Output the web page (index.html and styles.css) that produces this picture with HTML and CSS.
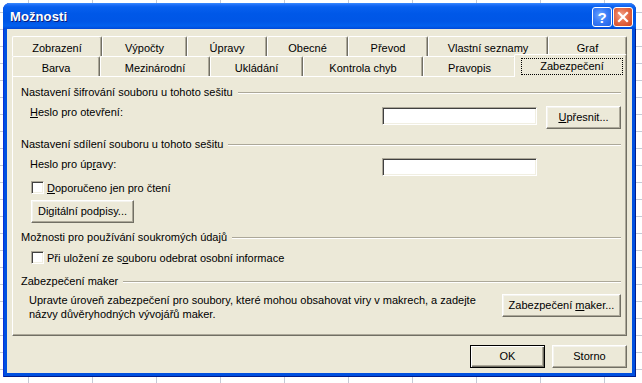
FILE: index.html
```html
<!DOCTYPE html>
<html lang="cs">
<head>
<meta charset="utf-8">
<title>Možnosti</title>
<link rel="stylesheet" href="styles.css">
</head>
<body>
<div class="dialog">
  <div class="titlebar">
    <span class="title">Možnosti</span>
    <div class="caption-buttons">
      <span class="cbtn help">?</span>
      <span class="cbtn close"><svg width="18" height="18" viewBox="0 0 18 18"><path d="M5 5 L13 13 M13 5 L5 13" stroke="#fff" stroke-width="2.2" stroke-linecap="square" fill="none"/></svg></span>
    </div>
  </div>
  <div class="client">
    <div class="tabs">
      <div class="tabrow back">
        <div class="tab">Zobrazení</div>
        <div class="tab">Výpočty</div>
        <div class="tab">Úpravy</div>
        <div class="tab">Obecné</div>
        <div class="tab">Převod</div>
        <div class="tab">Vlastní seznamy</div>
        <div class="tab">Graf</div>
      </div>
      <div class="tabrow front">
        <div class="tab">Barva</div>
        <div class="tab">Mezinárodní</div>
        <div class="tab">Ukládání</div>
        <div class="tab">Kontrola chyb</div>
        <div class="tab">Pravopis</div>
        <div class="tab selected"><span class="focus">Zabezpečení</span></div>
      </div>
    </div>
    <div class="panel">
      <div class="group g1"><span class="gtext">Nastavení šifrování souboru u tohoto sešitu</span><span class="gline"></span></div>
      <div class="row row-open">
        <span class="lbl"><u>H</u>eslo pro otevření:</span>
        <span class="edit"></span>
        <span class="btn btn-adv"><u>U</u>přesnit...</span>
      </div>
      <div class="group g2"><span class="gtext">Nastavení sdílení souboru u tohoto sešitu</span><span class="gline"></span></div>
      <div class="row row-modify">
        <span class="lbl">Heslo pro úp<u>r</u>avy:</span>
        <span class="edit"></span>
      </div>
      <div class="check c1"><span class="box"></span><span class="clabel"><u>D</u>oporučeno jen pro čtení</span></div>
      <div class="btnrow"><span class="btn btn-sign">Digitální podpisy...</span></div>
      <div class="group g3"><span class="gtext">Možnosti pro používání soukromých údajů</span><span class="gline"></span></div>
      <div class="check c2"><span class="box"></span><span class="clabel">Při uložení ze s<u>o</u>uboru odebrat osobní informace</span></div>
      <div class="group g4"><span class="gtext">Zabezpečení maker</span><span class="gline"></span></div>
      <div class="macro">
        <p class="mtext">Upravte úroveň zabezpečení pro soubory, které mohou obsahovat viry v makrech, a zadejte<br>názvy důvěryhodných vývojářů maker.</p>
        <span class="btn btn-macro">Zabezpečení <u>m</u>aker...</span>
      </div>
    </div>
    <div class="footer">
      <span class="btn default">OK</span>
      <span class="btn">Storno</span>
    </div>
  </div>
</div>
</body>
</html>
```
FILE: styles.css
```css
* { box-sizing: border-box; }
html, body { margin: 0; }
body {
  width: 642px;
  height: 383px;
  overflow: hidden;
  padding: 3px 0 0 3px;
  background-color: #fff;
  background-image:
    linear-gradient(to right, #C4CAD6 1px, transparent 1px),
    linear-gradient(to bottom, #C4CAD6 1px, transparent 1px);
  background-size: 64px 17px;
  background-position: 28px 12px;
  font: 11px "Liberation Sans", Arial, sans-serif;
  color: #000;
}
u { text-decoration: underline; text-underline-offset: 1px; }

.dialog {
  width: 633px;
  height: 374px;
  display: flex;
  flex-direction: column;
  background: #0050E0;
  border-radius: 7px 7px 0 0;
  box-shadow: inset 1px 0 #0831D9, inset -1px -1px #001C8C;
}

.titlebar {
  height: 26px;
  flex: none;
  display: flex;
  align-items: flex-start;
  padding-left: 7px;
  border-radius: 7px 7px 0 0;
  background: linear-gradient(to bottom, #3A8CFF 0, #1C6CF6 2px, #0860EE 4px, #0058E8 40%, #0056E6 70%, #0260EE 88%, #0048D8 100%);
}
.title {
  margin-top: 6px;
  font: bold 13px "Liberation Sans", Arial, sans-serif;
  color: #fff;
  text-shadow: 1px 1px #0A1C7A;
  letter-spacing: 0.1px;
}
.caption-buttons {
  margin-left: auto;
  margin-top: 4px;
  padding-right: 3px;
  display: flex;
  gap: 1px;
}
.cbtn {
  width: 20px;
  height: 20px;
  border: 1px solid #fff;
  border-radius: 3px;
  display: flex;
  align-items: center;
  justify-content: center;
  color: #fff;
  font: bold 15px "Liberation Sans", Arial, sans-serif;
}
.help {
  background: radial-gradient(circle at 40% 40%, #6FA6FF 0, #3A7DF7 45%, #1E5FE4 100%);
}
.close {
  background: radial-gradient(circle at 40% 40%, #F2A48C 0, #E46A47 45%, #CF4520 100%);
}

.client {
  flex: 1;
  margin: 0 4px 4px;
  background: #ECE9D8;
  padding: 7px 5px 0;
  display: flex;
  flex-direction: column;
}

.tabrow {
  display: flex;
  height: 20px;
  flex: none;
}
.tab {
  flex: none;
  height: 20px;
  background: #ECE9D8;
  border-top: 1px solid #fff;
  border-left: 1px solid #fff;
  border-right: 1px solid #716F64;
  border-top-left-radius: 2px;
  border-top-right-radius: 2px;
  box-shadow: inset -1px 0 #ACA899;
  text-align: center;
  padding-top: 4px;
  line-height: 14px;
  white-space: nowrap;
}
.back .tab:nth-child(1) { width: 90px; }
.back .tab:nth-child(2) { width: 85px; }
.back .tab:nth-child(3) { width: 80px; }
.back .tab:nth-child(4) { width: 81px; }
.back .tab:nth-child(5) { width: 80px; }
.back .tab:nth-child(6) { width: 120px; }
.back .tab:nth-child(7) { width: 79px; }
.front .tab:nth-child(1) { width: 88px; }
.front .tab:nth-child(2) { width: 110px; }
.front .tab:nth-child(3) { width: 93px; }
.front .tab:nth-child(4) { width: 120px; }
.front .tab:nth-child(5) { width: 93px; }
.tab.selected {
  width: 113px;
  height: 23px;
  margin-left: -2px;
  margin-top: -2px;
  position: relative;
  z-index: 2;
  padding: 3px 3px 0 6px;
}
.focus {
  display: block;
  height: 17px;
  border: 1px dotted #000;
  line-height: 15px;
}

.panel {
  position: relative;
  z-index: 1;
  flex: none;
  height: 260px;
  border-top: 1px solid #fff;
  border-left: 1px solid #fff;
  border-right: 1px solid #716F64;
  border-bottom: 1px solid #716F64;
  box-shadow: inset -1px -1px #ACA899;
  padding: 9px 5px 0 8px;
  display: flex;
  flex-direction: column;
}

.group {
  display: flex;
  align-items: center;
  height: 13px;
  line-height: 13px;
  white-space: nowrap;
}
.gtext { padding-right: 5px; }
.gline {
  flex: 1;
  height: 2px;
  border-top: 1px solid #ACA899;
  border-bottom: 1px solid #fff;
  margin-top: 1px;
}
.g2 { margin-top: 9px; }
.g3 { margin-top: 8px; }
.g4 { margin-top: 11px; }

.row {
  display: flex;
  align-items: flex-start;
  margin-top: 7px;
}
.lbl {
  flex: 1;
  padding-left: 9px;
  line-height: 13px;
  white-space: nowrap;
}
.edit {
  width: 155px;
  height: 18px;
  background: #fff;
  border: 1px solid;
  border-color: #ACA899 #fff #fff #ACA899;
  box-shadow: inset 1px 1px #404040, inset -1px -1px #F1EFE2;
}
.row-open .edit { margin-top: 1px; }
.row-modify { padding-right: 84px; }

.btn {
  display: block;
  flex: none;
  height: 23px;
  line-height: 20px;
  text-align: center;
  background: #ECE9D8;
  border: 1px solid;
  border-color: #fff #716F64 #716F64 #fff;
  box-shadow: inset -1px -1px #ACA899, inset 1px 1px #F4F3EE;
  white-space: nowrap;
}
.btn-adv { width: 75px; margin-left: 9px; }

.check {
  display: flex;
  align-items: center;
  height: 13px;
  padding-left: 10px;
  white-space: nowrap;
}
.c1 { margin-top: 5px; }
.c2 { margin-top: 7px; }
.box {
  width: 13px;
  height: 13px;
  background: #fff;
  border: 1px solid;
  border-color: #ACA899 #fff #fff #ACA899;
  box-shadow: inset 1px 1px #404040, inset -1px -1px #F1EFE2;
  margin-right: 3px;
}

.btnrow {
  display: flex;
  margin-top: 6px;
  padding-left: 10px;
}
.btn-sign { width: 103px; }

.macro {
  display: flex;
  align-items: flex-start;
  margin-top: 5px;
}
.mtext {
  flex: 1;
  margin: 0;
  padding-left: 8px;
  line-height: 14px;
  white-space: nowrap;
}
.btn-macro { width: 119px; margin-top: 1px; }

.footer {
  display: flex;
  justify-content: flex-end;
  gap: 7px;
  margin-top: 9px;
}
.footer .btn { width: 75px; }
.btn.default {
  border: 1px solid #000;
  box-shadow: inset 1px 1px #fff, inset -1px -1px #716F64, inset -2px -2px #ACA899;
}
```
